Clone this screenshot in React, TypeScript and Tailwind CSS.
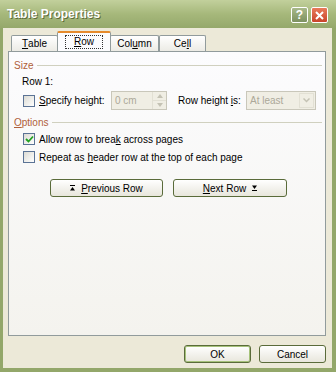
import type { ReactNode } from 'react';

const U = ({ children }: { children: ReactNode }) => <span className="underline underline-offset-[1px]">{children}</span>;

function CheckBox({ checked }: { checked?: boolean }) {
    return (
        <div className="w-[12px] h-[12px] border border-[#5b7395] bg-gradient-to-br from-[#dcdbd4] to-white flex items-center justify-center shrink-0">
            {checked && (
                <svg width="9" height="8" viewBox="0 0 9 8">
                    <path d="M1 4 L3.5 6.5 L8 1.5" fill="none" stroke="#21a121" strokeWidth="1.8" />
                </svg>
            )}
        </div>
    );
}

function Tab({ label, selected, w }: { label: ReactNode; selected?: boolean; w: string }) {
    if (selected) {
        return (
            <div className={`${w} h-[20px] -mx-[1px] relative z-10 bg-[#fcfcfe] border border-b-0 border-[#919b9c] border-t-[#e68b2c] border-t-[2px] rounded-t-[2px] flex items-center justify-center`}>
                <span className="border border-dotted border-[#333] px-[8px] leading-[12px]">{label}</span>
            </div>
        );
    }
    return (
        <div className={`${w} h-[16px] bg-gradient-to-b from-white to-[#ecebe5] border border-b-0 border-[#919b9c] rounded-t-[2px] flex items-center justify-center`}>
            {label}
        </div>
    );
}

function XPButton({ children, w, isDefault }: { children: ReactNode; w: string; isDefault?: boolean }) {
    return (
        <div className={`${w} h-[18px] rounded-[3px] border border-[#5a6b3a] bg-gradient-to-b from-white to-[#e8e6dc] flex items-center justify-center text-black ${isDefault ? 'shadow-[inset_0_0_0_1px_#a6c27a]' : ''}`}>
            {children}
        </div>
    );
}

export default function App() {
    return (
        <div className="w-[336px] h-[372px] flex flex-col bg-[#93a76a] text-[10px] text-black" style={{ fontFamily: '"Liberation Sans", Arial, sans-serif' }}>
            {/* title bar */}
            <div className="h-[28px] shrink-0 bg-gradient-to-b from-[#c2d09c] via-[#a6b87b] to-[#95a86b] flex items-center justify-between pl-[7px] pr-[8px]">
                <span className="text-white font-bold text-[12px] [text-shadow:1px_1px_0_#5d6b3c]">Table Properties</span>
                <div className="flex gap-[3px] mt-[2px]">
                    <div className="w-[17px] h-[16px] rounded-[2px] border border-white bg-gradient-to-b from-[#a9b98a] to-[#7d9160] flex items-center justify-center text-white font-bold text-[12px]">?</div>
                    <div className="w-[17px] h-[16px] rounded-[2px] border border-white bg-gradient-to-b from-[#e87a5a] to-[#c9432a] flex items-center justify-center">
                        <svg width="9" height="9" viewBox="0 0 9 9">
                            <path d="M1 1 L8 8 M8 1 L1 8" stroke="white" strokeWidth="2" />
                        </svg>
                    </div>
                </div>
            </div>

            {/* body */}
            <div className="flex-1 ml-[3px] mr-[4px] mb-[4px] bg-[#ece9d8] flex flex-col pl-[5px] pr-[6px] pt-[4px]">
                <div className="h-[19px] flex items-end pl-[3px]">
                    <Tab w="w-[47px]" label={<><U>T</U>able</>} />
                    <Tab w="w-[54px]" selected label={<><U>R</U>ow</>} />
                    <Tab w="w-[49px]" label={<>Col<U>u</U>mn</>} />
                    <Tab w="w-[47px]" label={<>Ce<U>l</U>l</>} />
                </div>

                <div className="h-[285px] border border-[#919b9c] bg-gradient-to-b from-[#fcfcfe] to-[#f4f3ee] flex flex-col pl-[5px] pr-[3px]">
                    <div className="mt-[6px] h-[14px] flex items-center gap-[4px]">
                        <span className="text-[#b0603a]">Size</span>
                        <div className="flex-1 h-px bg-[#d0d0bf]" />
                    </div>
                    <div className="mt-[2px] h-[14px] flex items-center pl-[8px]">Row 1:</div>
                    <div className="mt-[3px] h-[19px] flex items-center pl-[9px]">
                        <CheckBox />
                        <span className="ml-[4px] w-[72px]"><U>S</U>pecify height:</span>
                        <div className="w-[56px] h-[19px] border border-[#c9c7ba] bg-[#f0eee4] flex items-center">
                            <span className="flex-1 pl-[3px] text-[#aca899]">0 cm</span>
                            <div className="w-[14px] h-full flex flex-col border-l border-[#e2e0d4]">
                                <div className="flex-1 flex items-center justify-center border-b border-[#e2e0d4]">
                                    <svg width="6" height="4" viewBox="0 0 6 4"><path d="M0 4 L3 0 L6 4Z" fill="#c4c2b4" /></svg>
                                </div>
                                <div className="flex-1 flex items-center justify-center">
                                    <svg width="6" height="4" viewBox="0 0 6 4"><path d="M0 0 L3 4 L6 0Z" fill="#c4c2b4" /></svg>
                                </div>
                            </div>
                        </div>
                        <span className="ml-[11px] w-[68px]">Row height <U>i</U>s:</span>
                        <div className="w-[70px] h-[19px] border border-[#c9c7ba] bg-[#f0eee4] flex items-center">
                            <span className="flex-1 pl-[3px] text-[#aca899]">At least</span>
                            <div className="w-[15px] h-[15px] mr-[1px] border border-[#e2e0d4] flex items-center justify-center">
                                <svg width="7" height="5" viewBox="0 0 7 5"><path d="M0.5 0.5 L3.5 3.5 L6.5 0.5" fill="none" stroke="#c4c2b4" strokeWidth="1.5" /></svg>
                            </div>
                        </div>
                    </div>

                    <div className="mt-[5px] h-[14px] flex items-center gap-[4px]">
                        <span className="text-[#b0603a]"><U>O</U>ptions</span>
                        <div className="flex-1 h-px bg-[#d0d0bf]" />
                    </div>
                    <div className="mt-[3px] h-[14px] flex items-center pl-[9px]">
                        <CheckBox checked />
                        <span className="ml-[4px]">Allow row to brea<U>k</U> across pages</span>
                    </div>
                    <div className="mt-[4px] h-[14px] flex items-center pl-[9px]">
                        <CheckBox />
                        <span className="ml-[4px]">Repeat as <U>h</U>eader row at the top of each page</span>
                    </div>

                    <div className="mt-[15px] flex gap-[10px] pl-[36px]">
                        <XPButton w="w-[113px]">
                            <svg width="5" height="6" viewBox="0 0 5 6" className="mr-[6px]"><path d="M0 0.5 H5" stroke="black" strokeWidth="1" /><path d="M0 5.5 L2.5 2 L5 5.5Z" fill="black" /></svg>
                            <U>P</U>revious Row
                        </XPButton>
                        <XPButton w="w-[114px]">
                            <U>N</U>ext Row
                            <svg width="5" height="6" viewBox="0 0 5 6" className="ml-[6px]"><path d="M0 0.5 L2.5 4 L5 0.5Z" fill="black" /><path d="M0 5.5 H5" stroke="black" strokeWidth="1" /></svg>
                        </XPButton>
                    </div>
                </div>

                <div className="mt-[9px] flex justify-end gap-[8px]">
                    <XPButton w="w-[67px]" isDefault>OK</XPButton>
                    <XPButton w="w-[67px]">Cancel</XPButton>
                </div>
            </div>
        </div>
    );
}
